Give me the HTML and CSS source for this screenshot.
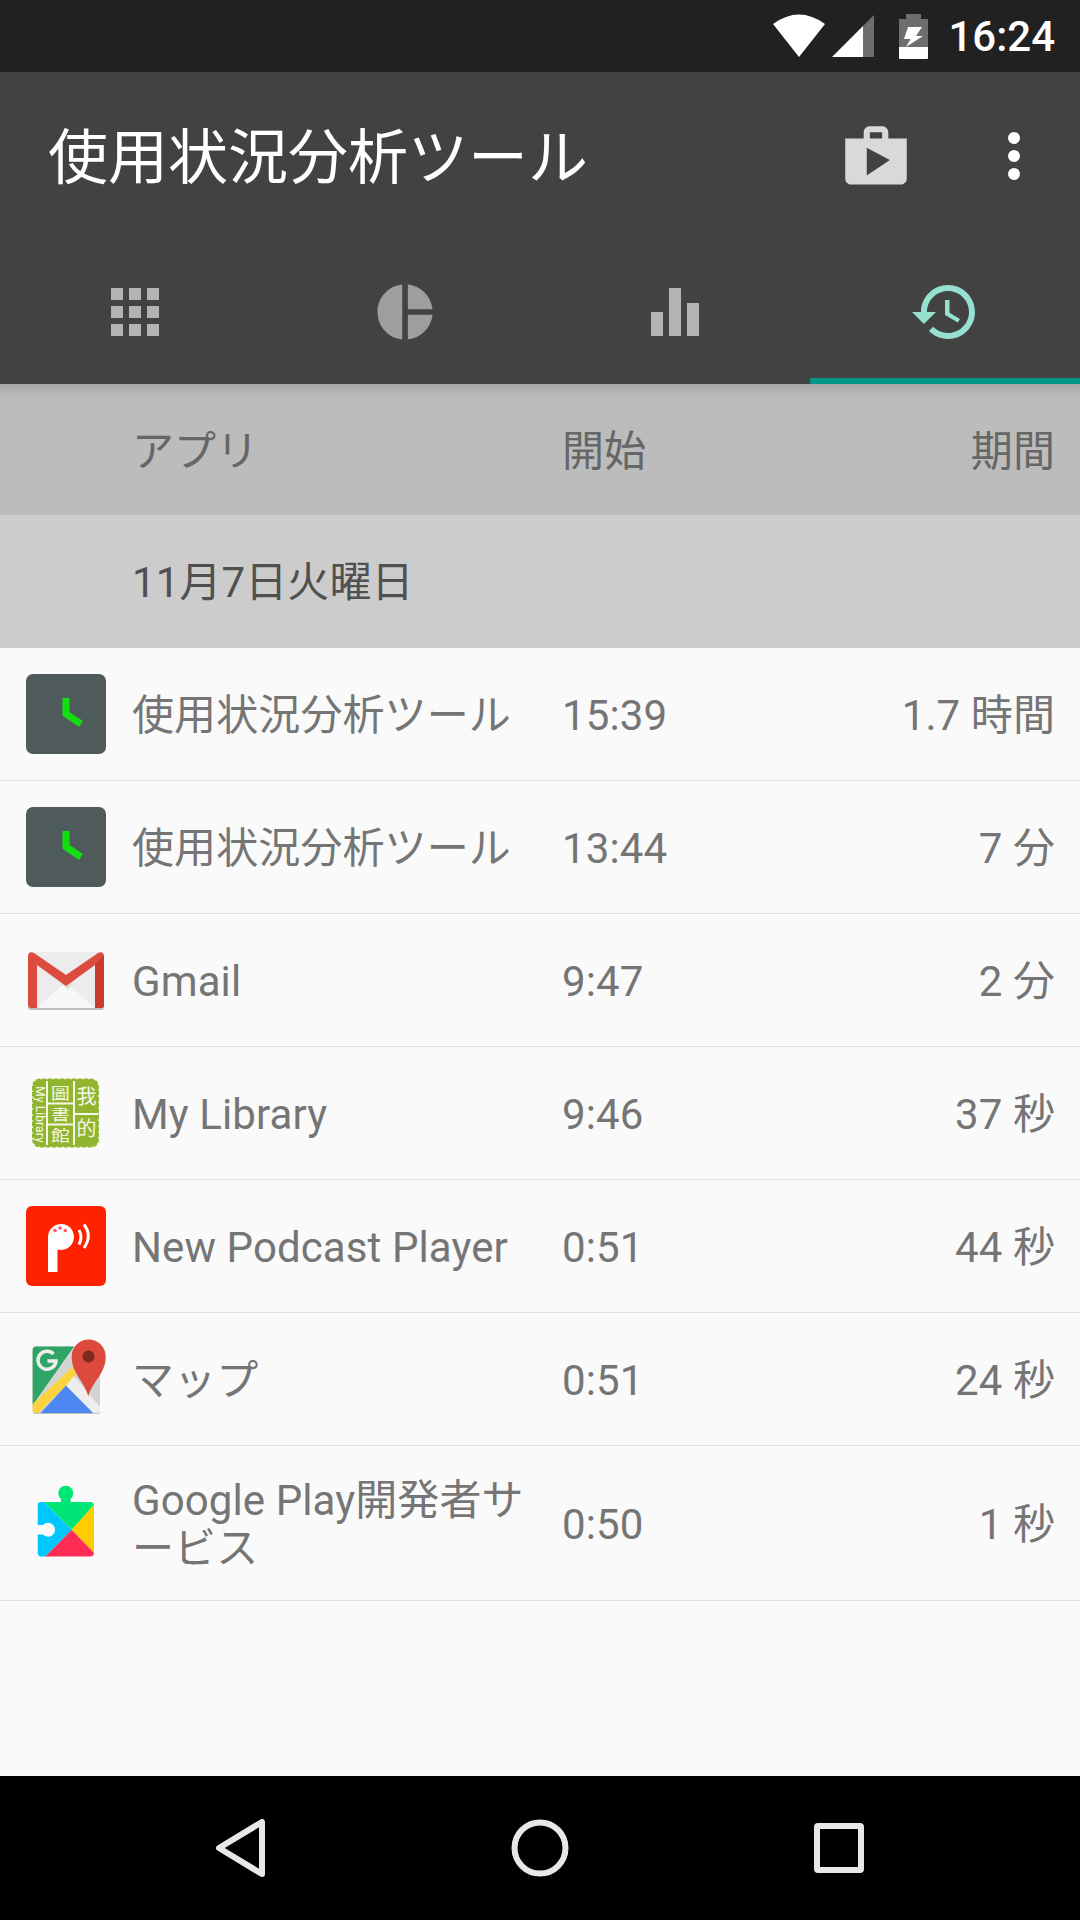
FILE: index.html
```html
<!DOCTYPE html>
<html lang="ja">
<head>
    <meta charset="UTF-8">
    <meta name="viewport" content="width=device-width, initial-scale=1.0">
    <title>使用状況分析ツール</title>
    <link rel="stylesheet" href="styles.css">
</head>
<body>
    <div class="status-bar">
        <svg class="status-wifi" width="54" height="44" viewBox="0 0 54 44"><path class="fill-white" d="M27 43 1 10Q27-9 53 10Z"/></svg>
        <svg class="status-signal" width="44" height="44" viewBox="0 0 44 44"><path class="fill-dim" d="M32 12 43 1v42H32Z"/><path class="fill-white" d="M1 43 32 12v31Z"/></svg>
        <svg class="status-battery" width="30" height="45" viewBox="0 0 30 45"><path class="fill-dim" d="M7 0h15v5h7v29H0V5h7Z"/><path class="fill-white" d="M0 33h29v11a1 1 0 0 1-1 1H1a1 1 0 0 1-1-1Z"/><path class="fill-white" d="M9 13h14l-6 9h7L7 33l4.700-8H5Z"/></svg>
        <span class="status-time">16:24</span>
    </div>

    <header class="app-bar">
        <div class="toolbar">
            <h1>使用状況分析ツール</h1>
            <svg class="icon-shop" width="74" height="72" viewBox="0 0 24 23.4"><path d="M16 6V4c0-1.11-.89-2-2-2h-4c-1.11 0-2 .89-2 2v2H2v13c0 1.11.89 2 2 2h16c1.11 0 2-.89 2-2V6h-6zm-6-2h4v2h-4V4zM9 18V9l7.5 4L9 18z"/></svg>
            <div class="overflow"><span></span><span></span><span></span></div>
        </div>
        <nav class="tabs">
            <div class="tab">
                <svg width="48" height="48" viewBox="0 0 48 48" class="tab-grid"><path d="M0 0h12v12H0zM18 0h12v12H18zM36 0h12v12H36zM0 18h12v12H0zM18 18h12v12H18zM36 18h12v12H36zM0 36h12v12H0zM18 36h12v12H18zM36 36h12v12H36z"/></svg>
            </div>
            <div class="tab">
                <svg width="66" height="66" viewBox="0 0 24 24" class="tab-pie"><path d="M11 2v20c-5.07-.5-9-4.79-9-10s3.93-9.5 9-10zm2.03 0v8.99H22c-.47-4.74-4.24-8.52-8.97-8.99zm0 11.01V22c4.74-.47 8.5-4.25 8.97-8.99h-8.97z"/></svg>
            </div>
            <div class="tab">
                <svg width="48" height="48" viewBox="0 0 48 48" class="tab-grid"><path d="M0 24h12v24H0zM18 0h12v48H18zM36 15h12v33H36z"/></svg>
            </div>
            <div class="tab tab-active">
                <svg width="72" height="72" viewBox="0 0 24 24" class="tab-history"><path d="M13 3c-4.97 0-9 4.03-9 9H1l3.89 3.89.07.14L9 12H6c0-3.87 3.13-7 7-7s7 3.13 7 7-3.13 7-7 7c-1.93 0-3.68-.79-4.94-2.06l-1.42 1.42C8.27 19.99 10.51 21 13 21c4.97 0 9-4.03 9-9s-4.03-9-9-9zm-1 5v5l4.28 2.54.72-1.21-3.5-2.08V8H12z"/></svg>
            </div>
        </nav>
    </header>

    <main class="content">
        <div class="row column-head">
            <div class="cell-app">アプリ</div>
            <div class="cell-start">開始</div>
            <div class="cell-length">期間</div>
        </div>
        <div class="date-head">11月7日火曜日</div>

        <div class="row">
            <div class="app-icon">
                <svg width="80" height="80" viewBox="0 0 80 80"><rect width="80" height="80" rx="7" fill="#4f5b5b"/><path d="M40 24v16l15 10" fill="none" stroke="#11dd11" stroke-width="7"/></svg>
            </div>
            <div class="cell-app">使用状況分析ツール</div>
            <div class="cell-start">15:39</div>
            <div class="cell-length">1.7 時間</div>
        </div>
        <div class="row">
            <div class="app-icon">
                <svg width="80" height="80" viewBox="0 0 80 80"><rect width="80" height="80" rx="7" fill="#4f5b5b"/><path d="M40 24v16l15 10" fill="none" stroke="#11dd11" stroke-width="7"/></svg>
            </div>
            <div class="cell-app">使用状況分析ツール</div>
            <div class="cell-start">13:44</div>
            <div class="cell-length">7 分</div>
        </div>
        <div class="row">
            <div class="app-icon">
                <svg width="80" height="80" viewBox="0 0 80 80">
                    <rect x="2" y="13" width="76" height="57" rx="3" fill="#bdbdbd"/>
                    <rect x="2" y="12" width="76" height="56" rx="3" fill="#ececec"/>
                    <path d="M11 68 40 42l29 26Z" fill="#f7f7f7"/>
                    <path d="M11 24 40 46l10-8-8 11Z" fill="#d9d9d9"/>
                    <path d="M2 16c0-3 3-5 6-3l32 22 32-22c3-2 6 0 6 3v49c0 2-1 3-3 3h-6V25L40 46 11 25v43H5c-2 0-3-1-3-3Z" fill="#dc4b3e"/>
                    <path d="M69 25l9-9v49c0 2-1 3-3 3h-6Z" fill="#c73c2e"/>
                </svg>
            </div>
            <div class="cell-app">Gmail</div>
            <div class="cell-start">9:47</div>
            <div class="cell-length">2 分</div>
        </div>
        <div class="row">
            <div class="app-icon">
                <svg width="80" height="80" viewBox="0 0 80 80">
                    <rect x="6" y="5.500" width="67" height="69" rx="8" class="seal-bg"/>
                    <path d="M21 8v64M48 8v64M21 30.500h27M21 51.500h27M48 41h24" class="seal-line"/>
                    <rect x="6" y="5.500" width="67" height="69" rx="8" class="seal-edge"/>
                    <text x="26.600" y="26" transform="scale(1.3 1)" class="seal-small">圖</text>
                    <text x="26.600" y="47" transform="scale(1.3 1)" class="seal-small">書</text>
                    <text x="26.600" y="68" transform="scale(1.3 1)" class="seal-small">館</text>
                    <text x="60.500" y="31" class="seal-big">我</text>
                    <text x="60.500" y="63" class="seal-big">的</text>
                    <text x="0" y="0" transform="translate(9.500 41.500) rotate(90)" class="seal-latin">My Library</text>
                </svg>
            </div>
            <div class="cell-app">My Library</div>
            <div class="cell-start">9:46</div>
            <div class="cell-length">37 秒</div>
        </div>
        <div class="row">
            <div class="app-icon">
                <svg width="80" height="80" viewBox="0 0 80 80">
                    <rect width="80" height="80" rx="6" fill="#ff2200"/>
                    <path d="M22 66V31a13 13 0 1 1 9.500 12.500V66Z" fill="#fff"/>
                    <circle cx="29" cy="24.500" r="1.800" fill="#ff5a6a"/><circle cx="34" cy="22" r="1.800" fill="#ff5a6a"/><circle cx="39.300" cy="24.500" r="1.800" fill="#ff5a6a"/>
                    <path d="M53 24q4 7 0 14.500M58 18.500q8.500 11 0 23.500" fill="none" stroke="#fff" stroke-width="3"/>
                </svg>
            </div>
            <div class="cell-app">New Podcast Player</div>
            <div class="cell-start">0:51</div>
            <div class="cell-length">44 秒</div>
        </div>
        <div class="row">
            <div class="app-icon">
                <svg width="80" height="80" viewBox="0 0 80 80">
                    <rect x="6.700" y="8.500" width="67.300" height="66.500" rx="3" fill="#bdbdbd"/>
                    <rect x="6.700" y="7.500" width="67.300" height="66.500" rx="3" fill="#d4d4d4"/>
                    <path d="M10 7.500h38L6.700 66V10.500c0-2 1.300-3 3.300-3Z" fill="#2ea567"/>
                    <path d="M6.700 65 47 27.500l3 9L12.300 74H10c-2 0-3.300-1.300-3.300-3Z" fill="#fdd33d"/>
                    <path d="M14.700 74 40 46.500 67.300 74Z" fill="#4d87f2"/>
                    <path d="M40 46.500l8-9.500 26 31v3c0 1.700-1.300 3-3 3h-3.700Z" fill="#eeeeee"/>
                    <path d="M27.500 15a9 9 0 1 0 2.500 7H21.500" fill="none" stroke="#eeeeee" stroke-width="3.500"/>
                    <path d="M62.300 57.500C59 43 45.700 35 45.700 17.500a17 17 0 0 1 34 0C79.700 35 66 43 62.300 57.500Z" fill="#db4a3c"/>
                    <circle cx="62.500" cy="17.500" r="6" fill="#7e2a22"/>
                </svg>
            </div>
            <div class="cell-app">マップ</div>
            <div class="cell-start">0:51</div>
            <div class="cell-length">24 秒</div>
        </div>
        <div class="row row-tall">
            <div class="app-icon">
                <svg width="80" height="80" viewBox="0 0 80 80">
                    <path d="M18 19h17v-3a7.500 7.500 0 1 1 9.500 0v3h20c2 0 3.500 1.500 3.500 3L45.700 46.800Z" fill="#00e676"/>
                    <path d="M68 22V70L45.700 46.800Z" fill="#ffcc00"/>
                    <path d="M68 70c0 2-1.500 3.500-3.500 3.500H19L45.700 46.800Z" fill="#ff2d55"/>
                    <path d="M18 19 45.700 46.800 19 73.500h-4c-2 0-3.300-1.500-3.300-3.500V51.600H17A7 7 0 1 0 17 42H11.700V22c0-2 1.300-3 3.300-3Z" fill="#00c8ff"/>
                </svg>
            </div>
            <div class="cell-app">Google Play開発者サービス</div>
            <div class="cell-start">0:50</div>
            <div class="cell-length">1 秒</div>
        </div>
    </main>

    <footer class="nav-bar">
        <svg width="50" height="58" viewBox="0 0 50 58"><path d="M3 29 46 3v52Z" class="nav-stroke"/></svg>
        <svg width="58" height="58" viewBox="0 0 58 58"><circle cx="29" cy="29" r="25.500" class="nav-stroke"/></svg>
        <svg width="50" height="50" viewBox="0 0 50 50"><rect x="3" y="3" width="44" height="44" rx="1" class="nav-stroke"/></svg>
    </footer>
</body>
</html>
```

FILE: styles.css
```css
* {
    margin: 0;
    padding: 0;
    box-sizing: border-box;
}

body {
    width: 1080px;
    height: 1920px;
    display: flex;
    flex-direction: column;
    overflow: hidden;
    font-family: Roboto, "Noto Sans CJK JP", sans-serif;
    background: #fafafa;
    color: #757575;
}

svg {
    display: block;
    flex: none;
}

.status-bar {
    height: 72px;
    display: flex;
    align-items: center;
    padding-right: 25px;
    justify-content: flex-end;
    background: #212121;
}

.fill-white {
    fill: #fff;
}

.fill-dim {
    fill: #6e6e6e;
}

.status-signal {
    margin-left: 5px;
}

.status-battery {
    margin-left: 24px;
}

.status-time {
    margin-left: 19px;
    font-size: 42px;
    font-weight: 500;
    color: #fff;
}

.app-bar {
    background: #424242;
}

.toolbar {
    height: 168px;
    display: flex;
    align-items: center;
    padding-left: 48px;
}

h1 {
    flex: 1;
    padding-top: 6px;
    font-size: 60px;
    line-height: 72px;
    font-weight: 400;
    color: #fff;
}

.icon-shop {
    fill: #d9d9d9;
}

.overflow {
    width: 12px;
    margin: 0 60px 0 95px;
    display: flex;
    flex-direction: column;
    gap: 6px;
}

.overflow span {
    height: 12px;
    border-radius: 50%;
    background: #fff;
}

.tabs {
    height: 144px;
    display: flex;
}

.tab {
    position: relative;
    flex: 1;
    display: flex;
    align-items: center;
    justify-content: center;
}

.tab-grid {
    fill: #b3b3b3;
}

.tab-pie {
    fill: #9e9e9e;
}

.tab-history {
    fill: #96e0d0;
}

.tab-active::after {
    content: "";
    position: absolute;
    left: 0;
    right: 0;
    bottom: 0;
    height: 6px;
    background: #009688;
}

.content {
    flex: 1;
}

.row {
    height: 133px;
    display: flex;
    align-items: center;
    padding-right: 25px;
    font-size: 42px;
    line-height: 48px;
    letter-spacing: 0.1px;
    border-bottom: 1px solid #e0e0e0;
}

.row-tall {
    height: 155px;
}

.app-icon {
    width: 80px;
    height: 80px;
    margin: 0 26px;
    flex: none;
}

.cell-app {
    width: 430px;
    padding: 4px 20px 0 0;
}

.cell-start {
    width: 200px;
    padding-top: 4px;
}

.cell-length {
    flex: 1;
    padding-top: 4px;
    text-align: right;
}

.column-head {
    height: 131px;
    color: #666;
    background: linear-gradient(#a8a8a8, #bcbcbc 14px);
    border-bottom: 0;
}

.column-head .cell-app {
    margin-left: 132px;
}

.date-head {
    height: 133px;
    display: flex;
    align-items: center;
    padding: 2px 0 0 132px;
    font-size: 42px;
    line-height: 48px;
    letter-spacing: 0.1px;
    color: #505050;
    background: #ccc;
}

/* stamp icon for My Library */
.seal-bg {
    fill: #92b52f;
}

.seal-line {
    fill: none;
    stroke: #f4f7e6;
    stroke-width: 2;
}

.seal-edge {
    fill: none;
    stroke: #f4f7e6;
    stroke-width: 1.5;
    stroke-dasharray: 2 4;
}

.seal-small,
.seal-big {
    font-family: "Noto Sans CJK TC", sans-serif;
    fill: #f4f7e6;
    text-anchor: middle;
}

.seal-small {
    font-size: 14.5px;
}

.seal-big {
    font-size: 20px;
}

.seal-latin {
    font-family: Roboto, sans-serif;
    font-size: 12px;
    fill: #f4f7e6;
    text-anchor: middle;
}

.nav-bar {
    height: 144px;
    padding: 0 216px;
    display: flex;
    align-items: center;
    justify-content: space-between;
    background: #000;
}

.nav-stroke {
    fill: none;
    stroke: #e8e8e8;
    stroke-width: 6;
    stroke-linejoin: round;
}
```
